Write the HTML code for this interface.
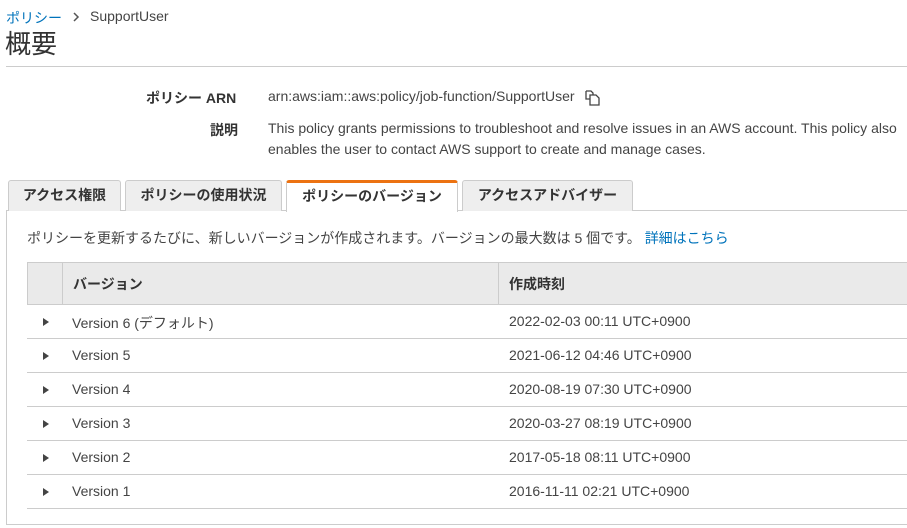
<!DOCTYPE html>
<html><head><meta charset="utf-8"><style>
*{margin:0;padding:0;box-sizing:border-box}
body{width:907px;height:528px;overflow:hidden;background:#fff;font-family:"Liberation Sans","Noto Sans CJK JP",sans-serif;color:#444;font-size:14px;position:relative}
.a{position:absolute;white-space:nowrap}
.tab{position:absolute;top:180px;height:31px;background:#eee;border:1px solid #ccc;border-bottom:none;border-radius:3px 3px 0 0;font-weight:bold;font-size:14px;color:#333;text-align:center;line-height:29px}
.row{position:absolute;left:27px;width:880px;height:34px;border-bottom:1px solid #ccc}
.row .tri{position:absolute;left:16px;top:13px;width:0;height:0;border-left:6px solid #444;border-top:4px solid transparent;border-bottom:4px solid transparent}
.row .v{position:absolute;left:45px;top:8px}
.row .d{position:absolute;left:482px;top:8px}
</style></head><body>
<div class="a" style="left:6px;top:8px;color:#0073bb">ポリシー</div>
<svg class="a" style="left:72px;top:12px" width="8" height="10" viewBox="0 0 8 10" fill="none" stroke="#555" stroke-width="1.5"><path d="M2 1l4 4-4 4"/></svg>
<div class="a" style="left:90px;top:8px;color:#444">SupportUser</div>
<div class="a" style="left:5px;top:24px;font-size:26px;color:#333">概要</div>
<div class="a" style="left:6px;top:66px;width:901px;height:1px;background:#ccc"></div>
<div class="a" style="left:146px;top:88px;font-weight:bold;color:#333">ポリシー ARN</div>
<div class="a" style="left:268px;top:88px">arn:aws:iam::aws:policy/job-function/SupportUser</div>
<svg class="a" style="left:584px;top:89px" width="17" height="17" viewBox="0 0 17 17" fill="none" stroke="#444" stroke-width="1.3"><path d="M2 2h5l2 2v2M2 2v8h4"/><path d="M6 6h6l3 3v7H6z"/></svg>
<div class="a" style="left:210px;top:120px;font-weight:bold;color:#333">説明</div>
<div class="a" style="left:268px;top:118px;line-height:21px">This policy grants permissions to troubleshoot and resolve issues in an AWS account. This policy also<br>enables the user to contact AWS support to create and manage cases.</div>
<div class="a" style="left:6px;top:210px;width:910px;height:315px;border:1px solid #ccc"></div>
<div class="tab" style="left:8px;width:113px">アクセス権限</div>
<div class="tab" style="left:125px;width:157px">ポリシーの使用状況</div>
<div class="tab" style="left:286px;width:172px;height:32px;background:#fff;border-top:3px solid #ec7211;line-height:27px">ポリシーのバージョン</div>
<div class="tab" style="left:462px;width:171px">アクセスアドバイザー</div>
<div class="a" style="left:27px;top:228px">ポリシーを更新するたびに、新しいバージョンが作成されます。バージョンの最大数は 5 個です。 <span style="color:#0073bb">詳細はこちら</span></div>
<div class="a" style="left:27px;top:262px;width:890px;height:43px;background:#eaeaea;border:1px solid #ccc"></div>
<div class="a" style="left:62px;top:263px;width:1px;height:41px;background:#ccc"></div>
<div class="a" style="left:498px;top:263px;width:1px;height:41px;background:#ccc"></div>
<div class="a" style="left:73px;top:274px;font-weight:bold;color:#333">バージョン</div>
<div class="a" style="left:509px;top:274px;font-weight:bold;color:#333">作成時刻</div>
<div class="row" style="top:305px"><div class="tri"></div><div class="v">Version 6 (デフォルト)</div><div class="d">2022-02-03 00:11 UTC+0900</div></div>
<div class="row" style="top:339px"><div class="tri"></div><div class="v">Version 5</div><div class="d">2021-06-12 04:46 UTC+0900</div></div>
<div class="row" style="top:373px"><div class="tri"></div><div class="v">Version 4</div><div class="d">2020-08-19 07:30 UTC+0900</div></div>
<div class="row" style="top:407px"><div class="tri"></div><div class="v">Version 3</div><div class="d">2020-03-27 08:19 UTC+0900</div></div>
<div class="row" style="top:441px"><div class="tri"></div><div class="v">Version 2</div><div class="d">2017-05-18 08:11 UTC+0900</div></div>
<div class="row" style="top:475px"><div class="tri"></div><div class="v">Version 1</div><div class="d">2016-11-11 02:21 UTC+0900</div></div>
</body></html>
